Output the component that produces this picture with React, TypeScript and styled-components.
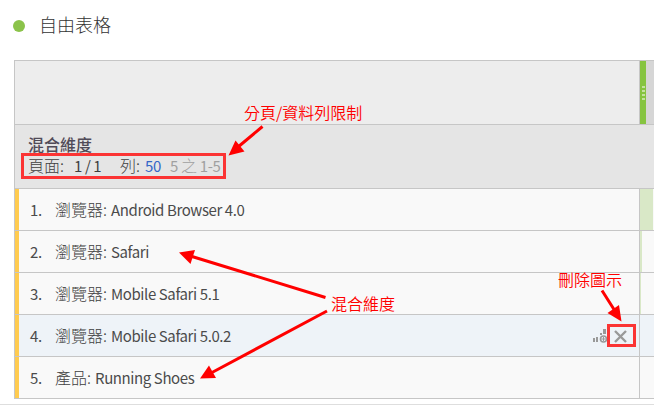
import React from 'react';
import styled, { createGlobalStyle } from 'styled-components';

const GlobalStyle = createGlobalStyle`
  * { box-sizing: border-box; }
  body { margin: 0; background: #fff; overflow: hidden; }
`;

const Page = styled.main`
  position: relative;
  width: 654px;
  height: 415px;
  overflow: hidden;
  font-family: "Noto Sans CJK TC", "Noto Sans", sans-serif;
  font-size: 16px;
  color: #4b4b4b;
`;

const Title = styled.h1`
  display: flex;
  align-items: center;
  gap: 14px;
  height: 60px;
  margin: 0;
  padding: 0 0 13px 13px;
  font-size: 18px;
  font-weight: 300;
  color: #333;
`;

const Dot = styled.span`
  width: 12px;
  height: 12px;
  margin-top: 5px;
  border-radius: 50%;
  background: #8bc34a;
`;

const Table = styled.section`
  margin-left: 14px;
  border-top: 1px solid #c6c6c6;
  border-left: 1px solid #c6c6c6;
`;

const HeaderTop = styled.div`
  display: flex;
  height: 64px;
  background: #ededed;
  border-bottom: 1px solid #c6c6c6;
`;

const HeaderBlank = styled.div`
  width: 625px;
  border-right: 1px solid #c6c6c6;
`;

const ColumnHandle = styled.div`
  display: flex;
  flex-direction: column;
  align-items: flex-end;
  justify-content: center;
  gap: 2px;
  width: 6px;
  padding: 1px 1px 0 0;
  background: #86c440;
`;

const Grip = styled.i`
  width: 3px;
  height: 2px;
  background: #c3e29f;
`;

const MetricHeader = styled.div`
  flex: 1;
  background: #d6d6d6;
`;

const HeaderBottom = styled.div`
  height: 64px;
  padding: 9px 0 0 13px;
  background: #e5e5e5;
  border-bottom: 1px solid #c6c6c6;
`;

const DimensionName = styled.div`
  height: 21px;
  line-height: 21px;
  font-weight: 500;
  color: #514b58;
`;

const Pager = styled.div`
  display: flex;
  height: 21px;
  line-height: 21px;
  font-weight: 300;
  white-space: pre;
`;

const PagerPart = styled.span<{ $width: number; $color?: string }>`
  width: ${(p) => p.$width}px;
  color: ${(p) => p.$color ?? '#3f3f3f'};
`;

const Latin = styled.span`
  font-size: 15px;
  font-weight: 400;
  letter-spacing: -0.4px;
`;

const Row = styled.div<{ $active?: boolean }>`
  display: flex;
  height: 42px;
  border-bottom: 1px solid #c6c6c6;
  background: ${(p) => (p.$active ? '#eef3f8' : '#f9f9f9')};
`;

const NameCell = styled.div`
  display: flex;
  align-items: center;
  width: 625px;
  padding-bottom: 2px;
  border-left: 4px solid #ffcb4f;
  border-right: 1px solid #c6c6c6;
`;

const RowNumber = styled.span`
  width: 36px;
  padding-left: 11px;
  white-space: nowrap;
`;

const RowName = styled.span`
  flex: 1;
  white-space: nowrap;
  font-weight: 300;
  color: #3f3f3f;
`;

const Value = styled(Latin)`
  margin-left: 4px;
  color: #4b4b4b;
`;

const Actions = styled.span`
  display: flex;
  height: 26px;
  width: 47px;
`;

const Bar = styled.div<{ $width: number }>`
  width: ${(p) => p.$width}px;
  background: #d9e8c7;
`;

const Footer = styled.footer`
  margin-top: 5px;
  border-top: 1px solid #dedede;
`;

const Annotations = styled.svg`
  position: absolute;
  inset: 0;
`;

const Note = styled.span<{ $x: number; $y: number }>`
  position: absolute;
  left: ${(p) => p.$x}px;
  top: ${(p) => p.$y}px;
  line-height: 20px;
  white-space: nowrap;
  font-weight: 350;
  color: #f00;
`;

const rows = [
  { kind: '瀏覽器', value: 'Android Browser 4.0', bar: 13 },
  { kind: '瀏覽器', value: 'Safari', bar: 2 },
  { kind: '瀏覽器', value: 'Mobile Safari 5.1', bar: 1 },
  { kind: '瀏覽器', value: 'Mobile Safari 5.0.2', bar: 0, active: true },
  { kind: '產品', value: 'Running Shoes', bar: 0 },
];

const RowActions = () => (
  <Actions>
    <svg width="47" height="26" viewBox="0 0 47 26">
      <path d="M1 16h2v4H1zM4 15h2v5H4zM8 11h2v2H8zM11 7h3v5h-3z" fill="#999" />
      <circle cx="11.500" cy="17" r="3" fill="none" stroke="#999" strokeWidth="1.600" />
      <path d="M9.500 16.500h4v1h-4zM11 15h1v4h-1z" fill="#999" />
      <path d="M23 9 34 20M34 9 23 20" stroke="#999" strokeWidth="2.400" fill="none" />
    </svg>
  </Actions>
);

export default function App() {
  return (
    <Page>
      <GlobalStyle />
      <Title><Dot />自由表格</Title>
      <Table>
        <HeaderTop>
          <HeaderBlank />
          <ColumnHandle><Grip /><Grip /><Grip /><Grip /></ColumnHandle>
          <MetricHeader />
        </HeaderTop>
        <HeaderBottom>
          <DimensionName>混合維度</DimensionName>
          <Pager>
            <PagerPart $width={46}>頁面:</PagerPart>
            <PagerPart $width={46}><Latin>1 / 1</Latin></PagerPart>
            <PagerPart $width={25}>列:</PagerPart>
            <PagerPart $width={25} $color="#3466c8"><Latin>50</Latin></PagerPart>
            <PagerPart $width={60} $color="#a0a0a0"><Latin>5 </Latin>之<Latin> 1-5</Latin></PagerPart>
          </Pager>
        </HeaderBottom>
        {rows.map((row, i) => (
          <Row key={row.value} $active={row.active}>
            <NameCell>
              <RowNumber><Latin>{i + 1}.</Latin></RowNumber>
              <RowName>{row.kind}:<Value>{row.value}</Value></RowName>
              {row.active && <RowActions />}
            </NameCell>
            <Bar $width={row.bar} />
          </Row>
        ))}
      </Table>
      <Footer />
      <Annotations width="654" height="415" viewBox="0 0 654 415">
        <g fill="none" stroke="#fb3434" strokeWidth="3">
          <rect x="22.500" y="154.500" width="202" height="23" />
          <rect x="608.500" y="325.500" width="26" height="20" />
        </g>
        <path
          d="M262.500 126.500 238 147M325.500 297.500 192 256.500M327 311 212 372.500M602 290.500 615 311"
          stroke="#f00"
          strokeWidth="3"
          fill="none"
        />
        <g fill="#f00">
          <path d="M228.500 155.500 235.500 140.500 244.500 151.500Z" />
          <path d="M179 252.500 195 250 190.500 264Z" />
          <path d="M200 378.500 209 365.500 216 378Z" />
          <path d="M621.500 321.500 607.500 313 619 305Z" />
        </g>
      </Annotations>
      <Note $x={244} $y={102}>分頁/資料列限制</Note>
      <Note $x={331} $y={293}>混合維度</Note>
      <Note $x={558} $y={269}>刪除圖示</Note>
    </Page>
  );
}
